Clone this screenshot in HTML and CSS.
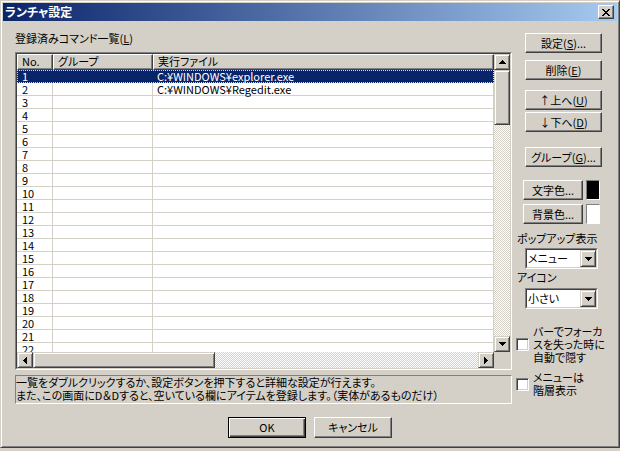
FILE: index.html
```html
<!DOCTYPE html>
<html lang="ja">
<head>
<meta charset="utf-8">
<title>ランチャ設定</title>
<link rel="stylesheet" href="styles.css">
</head>
<body>
<div class="window">
  <div class="titlebar">
    <span class="title">ランチャ設定</span>
    <span class="close"><svg width="8" height="7" viewBox="0 0 8 7"><path d="M0 0h2v1h-2z M6 0h2v1h-2z M1 1h2v1h-2z M5 1h2v1h-2z M2 2h4v1h-4z M3 3h2v1h-2z M2 4h4v1h-4z M1 5h2v1h-2z M5 5h2v1h-2z M0 6h2v1h-2z M6 6h2v1h-2z" fill="#000"/></svg></span>
  </div>
  <div class="client">
    <div class="main">
      <div class="leftcol">
        <div class="label">登録済みコマンド一覧(<u>L</u>)</div>
        <div class="list">
          <div class="list-inner">
            <div class="view">
              <div class="hdr">
                <div class="hc c1">No.</div>
                <div class="hc c2">グループ</div>
                <div class="hc c3">実行ファイル</div>
              </div>
              <div class="row sel"><div class="c c1">1</div><div class="c c2"></div><div class="c c3">C:¥WINDOWS¥explorer.exe</div></div>
              <div class="row"><div class="c c1">2</div><div class="c c2"></div><div class="c c3">C:¥WINDOWS¥Regedit.exe</div></div>
              <div class="row"><div class="c c1">3</div><div class="c c2"></div><div class="c c3"></div></div>
              <div class="row"><div class="c c1">4</div><div class="c c2"></div><div class="c c3"></div></div>
              <div class="row"><div class="c c1">5</div><div class="c c2"></div><div class="c c3"></div></div>
              <div class="row"><div class="c c1">6</div><div class="c c2"></div><div class="c c3"></div></div>
              <div class="row"><div class="c c1">7</div><div class="c c2"></div><div class="c c3"></div></div>
              <div class="row"><div class="c c1">8</div><div class="c c2"></div><div class="c c3"></div></div>
              <div class="row"><div class="c c1">9</div><div class="c c2"></div><div class="c c3"></div></div>
              <div class="row"><div class="c c1">10</div><div class="c c2"></div><div class="c c3"></div></div>
              <div class="row"><div class="c c1">11</div><div class="c c2"></div><div class="c c3"></div></div>
              <div class="row"><div class="c c1">12</div><div class="c c2"></div><div class="c c3"></div></div>
              <div class="row"><div class="c c1">13</div><div class="c c2"></div><div class="c c3"></div></div>
              <div class="row"><div class="c c1">14</div><div class="c c2"></div><div class="c c3"></div></div>
              <div class="row"><div class="c c1">15</div><div class="c c2"></div><div class="c c3"></div></div>
              <div class="row"><div class="c c1">16</div><div class="c c2"></div><div class="c c3"></div></div>
              <div class="row"><div class="c c1">17</div><div class="c c2"></div><div class="c c3"></div></div>
              <div class="row"><div class="c c1">18</div><div class="c c2"></div><div class="c c3"></div></div>
              <div class="row"><div class="c c1">19</div><div class="c c2"></div><div class="c c3"></div></div>
              <div class="row"><div class="c c1">20</div><div class="c c2"></div><div class="c c3"></div></div>
              <div class="row"><div class="c c1">21</div><div class="c c2"></div><div class="c c3"></div></div>
              <div class="row"><div class="c c1">22</div><div class="c c2"></div><div class="c c3"></div></div>
            </div>
            <div class="vscroll">
              <div class="sbtn"><svg width="7" height="4" viewBox="0 0 7 4"><path d="M3 0h1v1h-1z M2 1h3v1h-3z M1 2h5v1h-5z M0 3h7v1h-7z" fill="#000"/></svg></div>
              <div class="sthumb vthumb"></div>
              <div class="strack"></div>
              <div class="sbtn"><svg width="7" height="4" viewBox="0 0 7 4"><path d="M0 0h7v1h-7z M1 1h5v1h-5z M2 2h3v1h-3z M3 3h1v1h-1z" fill="#000"/></svg></div>
            </div>
            <div class="hscroll">
              <div class="sbtn"><svg width="4" height="7" viewBox="0 0 4 7"><path d="M0 3h1v1h-1z M1 2h1v3h-1z M2 1h1v5h-1z M3 0h1v7h-1z" fill="#000"/></svg></div>
              <div class="sthumb hthumb"></div>
              <div class="strack"></div>
              <div class="sbtn"><svg width="4" height="7" viewBox="0 0 4 7"><path d="M0 0h1v7h-1z M1 1h1v5h-1z M2 2h1v3h-1z M3 3h1v1h-1z" fill="#000"/></svg></div>
            </div>
            <div class="corner"></div>
          </div>
        </div>
        <div class="info">一覧をダブルクリックするか、設定ボタンを押下すると詳細な設定が行えます。<br>また、この画面にD＆Dすると、空いている欄にアイテムを登録します。（実体があるものだけ）</div>
      </div>
      <div class="rightcol">
        <div class="btn b-set">設定(<u>S</u>)...</div>
        <div class="btn b-del">削除(<u>E</u>)</div>
        <div class="btn b-up">↑上へ(<u>U</u>)</div>
        <div class="btn b-down">↓下へ(<u>D</u>)</div>
        <div class="btn b-grp">グループ(<u>G</u>)...</div>
        <div class="colorrow cr1"><div class="btn cbtn">文字色...</div><div class="swatch black"></div></div>
        <div class="colorrow cr2"><div class="btn cbtn">背景色...</div><div class="swatch white"></div></div>
        <div class="rlabel l1">ポップアップ表示</div>
        <div class="combo c-menu"><div class="combo-in"><span class="ctext">メニュー</span><div class="cbtn-drop"><svg width="7" height="4" viewBox="0 0 7 4"><path d="M0 0h7v1h-7z M1 1h5v1h-5z M2 2h3v1h-3z M3 3h1v1h-1z" fill="#000"/></svg></div></div></div>
        <div class="rlabel l2">アイコン</div>
        <div class="combo c-icon"><div class="combo-in"><span class="ctext">小さい</span><div class="cbtn-drop"><svg width="7" height="4" viewBox="0 0 7 4"><path d="M0 0h7v1h-7z M1 1h5v1h-5z M2 2h3v1h-3z M3 3h1v1h-1z" fill="#000"/></svg></div></div></div>
        <div class="check ch1"><span class="box"></span><span class="ctxt">バーでフォーカ<br>スを失った時に<br>自動で隠す</span></div>
        <div class="check ch2"><span class="box"></span><span class="ctxt">メニューは<br>階層表示</span></div>
      </div>
    </div>
    <div class="actions">
      <div class="btn okbtn">OK</div>
      <div class="btn cancelbtn">キャンセル</div>
    </div>
  </div>
</div>
</body>
</html>
```
FILE: styles.css
```css
* { box-sizing: border-box; }
html, body { margin: 0; padding: 0; }
body {
  width: 620px;
  height: 451px;
  overflow: hidden;
  background: #d4d0c8;
  font-family: "Noto Sans CJK JP", "Liberation Sans", sans-serif;
  font-size: 11px;
  line-height: 13px;
  color: #000;
  font-feature-settings: "palt";
}
u { text-decoration: underline; text-underline-offset: 1px; }

.window {
  width: 620px;
  height: 448px;
  background: #d4d0c8;
  border: 1px solid;
  border-color: #d4d0c8 #404040 #404040 #d4d0c8;
  box-shadow: inset 1px 1px #fff, inset -1px -1px #808080;
  padding: 2px;
  display: flex;
  flex-direction: column;
}

.titlebar {
  height: 18px;
  flex: none;
  background: linear-gradient(to right, #0a246a, #a6caf0);
  display: flex;
  align-items: center;
  justify-content: space-between;
  padding: 0 3px 0 2px;
}
.title { color: #fff; font-weight: bold; font-size: 12px; line-height: 14px; }
.close {
  width: 16px;
  height: 14px;
  background: #d4d0c8;
  border: 1px solid;
  border-color: #fff #404040 #404040 #fff;
  box-shadow: inset -1px -1px #808080;
  display: flex;
  align-items: center;
  justify-content: center;
}
.close svg { display: block; }

.client { flex: 1; display: flex; flex-direction: column; }
.main { display: flex; }

.leftcol { margin-left: 12px; width: 497px; }
.label { margin-top: 11px; height: 13px; white-space: nowrap; }

.list {
  margin-top: 7px;
  width: 497px;
  height: 318px;
  border: 1px solid;
  border-color: #808080 #fff #fff #808080;
}
.list-inner {
  width: 100%;
  height: 100%;
  border: 1px solid;
  border-color: #404040 #d4d0c8 #d4d0c8 #404040;
  display: grid;
  grid-template-columns: 477px 16px;
  grid-template-rows: 298px 16px;
}
.view { background: #fff; overflow: hidden; }
.hdr { display: flex; height: 16px; }
.hc {
  height: 16px;
  background: #d4d0c8;
  border: 1px solid;
  border-color: #fff #404040 #404040 #fff;
  box-shadow: inset -1px -1px #808080;
  padding-left: 4px;
  line-height: 13px;
  white-space: nowrap;
}
.c1 { width: 36px; flex: none; }
.c2 { width: 100px; flex: none; }
.c3 { flex: 1; }
.row { display: flex; height: 13px; border-bottom: 1px solid #d4d0c8; }
.c {
  height: 12px;
  line-height: 12px;
  padding-left: 5px;
  border-right: 1px solid #d4d0c8;
  white-space: nowrap;
}
.row .c3 { padding-left: 4px; }
.row.sel {
  background: #0a246a;
  color: #fff;
  outline: 1px dotted #f2d98c;
  outline-offset: -1px;
  border-bottom-color: #0a246a;
}
.row.sel .c { border-right-color: #0a246a; }

.vscroll, .hscroll {
  display: flex;
  background: repeating-conic-gradient(#fff 0 25%, #d4d0c8 0 50%) 0 0 / 2px 2px;
}
.vscroll { flex-direction: column; }
.sbtn, .sthumb {
  width: 16px;
  height: 16px;
  flex: none;
  background: #d4d0c8;
  border: 1px solid;
  border-color: #d4d0c8 #404040 #404040 #d4d0c8;
  box-shadow: inset 1px 1px #fff, inset -1px -1px #808080;
  display: flex;
  align-items: center;
  justify-content: center;
}
.sbtn svg { display: block; }
.vthumb { height: 55px; }
.hthumb { width: 182px; }
.strack { flex: 1; }
.corner { background: #d4d0c8; }

.info {
  margin-top: 5px;
  height: 29px;
  border: 1px solid;
  border-color: #808080 #fff #fff #808080;
  line-height: 13px;
  white-space: nowrap;
  overflow: hidden;
}

.rightcol { margin-left: 4px; width: 98px; display: flex; flex-direction: column; }
.btn {
  height: 20px;
  background: #d4d0c8;
  border: 1px solid;
  border-color: #fff #404040 #404040 #fff;
  box-shadow: inset -1px -1px #808080;
  display: flex;
  align-items: center;
  justify-content: center;
  white-space: nowrap;
  line-height: 13px;
}
.rightcol > .btn { width: 77px; margin-left: 9px; }
.b-set { margin-top: 12px; }
.b-del { margin-top: 7px; }
.b-up { margin-top: 10px; }
.b-down { margin-top: 2px; }
.b-grp { margin-top: 15px; }
.colorrow { display: flex; margin-left: 7px; }
.cr1 { margin-top: 13px; }
.cr2 { margin-top: 4px; }
.cbtn { width: 60px; }
.swatch {
  margin-left: 3px;
  width: 14px;
  height: 20px;
  border: 1px solid;
  border-color: #808080 #fff #fff #808080;
}
.swatch.black { background: #000; }
.swatch.white { background: #fff; }

.rlabel { margin-left: 1px; height: 13px; white-space: nowrap; }
.l1 { margin-top: 8px; }
.l2 { margin-top: 2px; }
.combo {
  margin-left: 9px;
  width: 73px;
  height: 21px;
  border: 1px solid;
  border-color: #808080 #fff #fff #808080;
}
.c-menu { margin-top: 3px; }
.c-icon { margin-top: 4px; }
.combo-in {
  width: 100%;
  height: 100%;
  border: 1px solid;
  border-color: #404040 #d4d0c8 #d4d0c8 #404040;
  background: #fff;
  display: flex;
  align-items: center;
}
.ctext { flex: 1; padding-left: 1px; white-space: nowrap; }
.cbtn-drop {
  width: 16px;
  height: 17px;
  align-self: stretch;
  background: #d4d0c8;
  border: 1px solid;
  border-color: #d4d0c8 #404040 #404040 #d4d0c8;
  box-shadow: inset 1px 1px #fff, inset -1px -1px #808080;
  display: flex;
  align-items: center;
  justify-content: center;
}
.cbtn-drop svg { display: block; }

.check { display: flex; align-items: center; gap: 4px; }
.ch1 { margin-top: 16px; }
.ch2 { margin-top: 7px; }
.box {
  width: 13px;
  height: 13px;
  flex: none;
  background: #fff;
  border: 1px solid;
  border-color: #808080 #fff #fff #808080;
  box-shadow: inset 1px 1px #404040, inset -1px -1px #d4d0c8;
}
.ctxt { line-height: 13px; white-space: nowrap; }

.actions { display: flex; justify-content: center; gap: 8px; margin-top: 13px; }
.okbtn, .cancelbtn { width: 78px; height: 21px; }
.okbtn {
  border: 1px solid #000;
  box-shadow: inset 1px 1px #fff, inset -1px -1px #404040, inset -2px -2px #808080;
}
```
